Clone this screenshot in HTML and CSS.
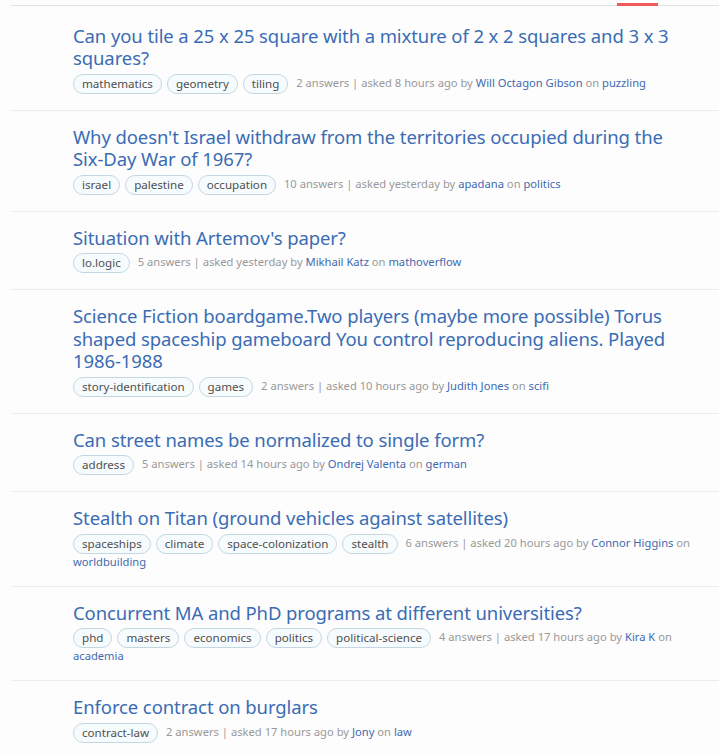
FILE: index.html
```html
<!DOCTYPE html>
<html>
<head>
<meta charset="utf-8">
<link rel="stylesheet" href="styles.css">
</head>
<body>
<div class="page">
  <div class="topbar"><span class="active"></span></div>
  <ul class="list">
    <li class="item">
      <a class="title">Can you tile a 25 x 25 square with a mixture of 2 x 2 squares and 3 x 3 squares?</a>
      <div class="meta"><span class="tag">mathematics</span><span class="tag">geometry</span><span class="tag">tiling</span> 2 answers | asked 8 hours ago by <a class="link">Will Octagon Gibson</a> on <a class="link">puzzling</a></div>
    </li>
    <li class="item">
      <a class="title">Why doesn't Israel withdraw from the territories occupied during the Six-Day War of 1967?</a>
      <div class="meta"><span class="tag">israel</span><span class="tag">palestine</span><span class="tag">occupation</span> 10 answers | asked yesterday by <a class="link">apadana</a> on <a class="link">politics</a></div>
    </li>
    <li class="item">
      <a class="title">Situation with Artemov's paper?</a>
      <div class="meta"><span class="tag">lo.logic</span> 5 answers | asked yesterday by <a class="link">Mikhail Katz</a> on <a class="link">mathoverflow</a></div>
    </li>
    <li class="item">
      <a class="title">Science Fiction boardgame.Two players (maybe more possible) Torus shaped spaceship gameboard You control reproducing aliens. Played 1986-1988</a>
      <div class="meta"><span class="tag">story-identification</span><span class="tag">games</span> 2 answers | asked 10 hours ago by <a class="link">Judith Jones</a> on <a class="link">scifi</a></div>
    </li>
    <li class="item">
      <a class="title">Can street names be normalized to single form?</a>
      <div class="meta"><span class="tag">address</span> 5 answers | asked 14 hours ago by <a class="link">Ondrej Valenta</a> on <a class="link">german</a></div>
    </li>
    <li class="item">
      <a class="title">Stealth on Titan (ground vehicles against satellites)</a>
      <div class="meta"><span class="tag">spaceships</span><span class="tag">climate</span><span class="tag">space-colonization</span><span class="tag">stealth</span> 6 answers | asked 20 hours ago by <a class="link">Connor Higgins</a> on <a class="link">worldbuilding</a></div>
    </li>
    <li class="item">
      <a class="title">Concurrent MA and PhD programs at different universities?</a>
      <div class="meta"><span class="tag">phd</span><span class="tag">masters</span><span class="tag">economics</span><span class="tag">politics</span><span class="tag">political-science</span> 4 answers | asked 17 hours ago by <a class="link">Kira K</a> on <a class="link">academia</a></div>
    </li>
    <li class="item">
      <a class="title">Enforce contract on burglars</a>
      <div class="meta"><span class="tag">contract-law</span> 2 answers | asked 17 hours ago by <a class="link">Jony</a> on <a class="link">law</a></div>
    </li>
  </ul>
</div>
</body>
</html>
```
FILE: styles.css
```css
html, body {
  margin: 0;
  padding: 0;
  background: #fdfdfd;
}
body {
  font-family: "Noto Sans", "Open Sans", sans-serif;
  overflow: hidden;
}
.page {
  padding: 4px 0 0 11px;
}
.topbar {
  position: relative;
  height: 1px;
  background: #e3e3e3;
  margin-top: 1px;
}
.topbar .active {
  position: absolute;
  left: 606px;
  top: -2px;
  width: 41px;
  height: 3px;
  background: #f05a5a;
}
.list {
  list-style: none;
  margin: 0;
  padding: 0;
}
.item {
  padding: 15px 28px 16px 62px;
  border-bottom: 1px solid #ececec;
}
.item:first-child {
  padding-top: 18.5px;
}
.title {
  display: block;
  font-size: 18.5px;
  line-height: 22.5px;
  color: #3a6cb4;
  letter-spacing: -0.1px;
}
.meta {
  margin-top: 4px;
  font-size: 11.2px;
  line-height: 16px;
  color: #999;
}
.tag {
  display: inline-block;
  height: 18px;
  line-height: 18px;
  padding: 0 8px;
  margin: 0 5px 0 0;
  border: 1px solid #c4d7e0;
  border-radius: 10px;
  background: #f6fbfd;
  color: #4f4f4f;
  font-size: 11.6px;
  vertical-align: middle;
}
.link {
  color: #3f6ab0;
}
```
